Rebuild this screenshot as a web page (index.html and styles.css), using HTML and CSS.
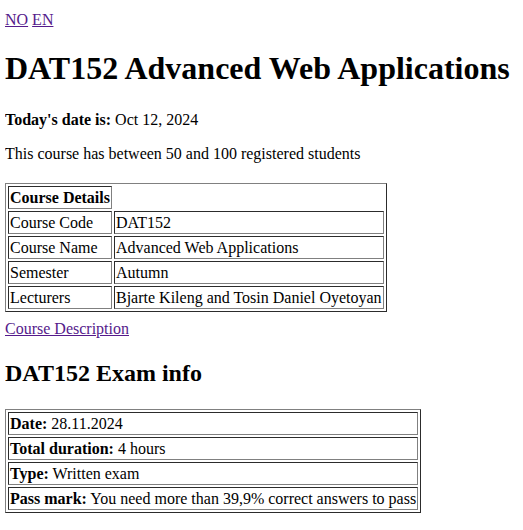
FILE: index.html
```html
<!DOCTYPE html>
<html lang="en">
<head>
<meta charset="utf-8">
<title>DAT152</title>
<link rel="stylesheet" href="styles.css">
</head>
<body class="page">
<div class="lang"><a href="#">NO</a> <a href="#">EN</a></div>
<h1 class="title">DAT152 Advanced Web Applications</h1>
<p><b>Today's date is:</b> Oct 12, 2024</p>
<p>This course has between 50 and 100 registered students</p>
<table class="grid details">
<tr><th class="cell head">Course Details</th></tr>
<tr><td class="cell">Course Code</td><td class="cell">DAT152</td></tr>
<tr><td class="cell">Course Name</td><td class="cell">Advanced Web Applications</td></tr>
<tr><td class="cell">Semester</td><td class="cell">Autumn</td></tr>
<tr><td class="cell">Lecturers</td><td class="cell">Bjarte Kileng and Tosin Daniel Oyetoyan</td></tr>
</table>
<div class="desc"><a href="#">Course Description</a></div>
<h2 class="sub">DAT152 Exam info</h2>
<table class="grid">
<tr><td class="cell"><b>Date:</b> 28.11.2024</td></tr>
<tr><td class="cell"><b>Total duration:</b> 4 hours</td></tr>
<tr><td class="cell"><b>Type:</b> Written exam</td></tr>
<tr><td class="cell"><b>Pass mark:</b> You need more than 39,9% correct answers to pass</td></tr>
</table>
</body>
</html>
```

FILE: styles.css
```css
html, body {
  font-family: "Liberation Serif", "Times New Roman", serif;
  font-size: 16px;
  color: #000;
  background: #fff;
}
.page { margin: 11px 5px 8px 5px; }
a { color: #551a8b; }
.lang { margin: 0; }
.title { font-size: 32px; margin: 21px 0 24px; font-weight: bold; }
.sub { font-size: 24px; margin: 22px 0 22px; font-weight: bold; }
p { margin: 16px 0; }
.grid {
  border-collapse: separate;
  border-spacing: 2px;
  border: 1px outset #808080;
}
.details { margin-top: 20px; }
.cell {
  border: 1px inset #808080;
  padding: 1px;
  line-height: 19px;
  text-align: left;
}
.head { font-weight: bold; text-align: center; }
.desc { margin-top: 8px; }
```
